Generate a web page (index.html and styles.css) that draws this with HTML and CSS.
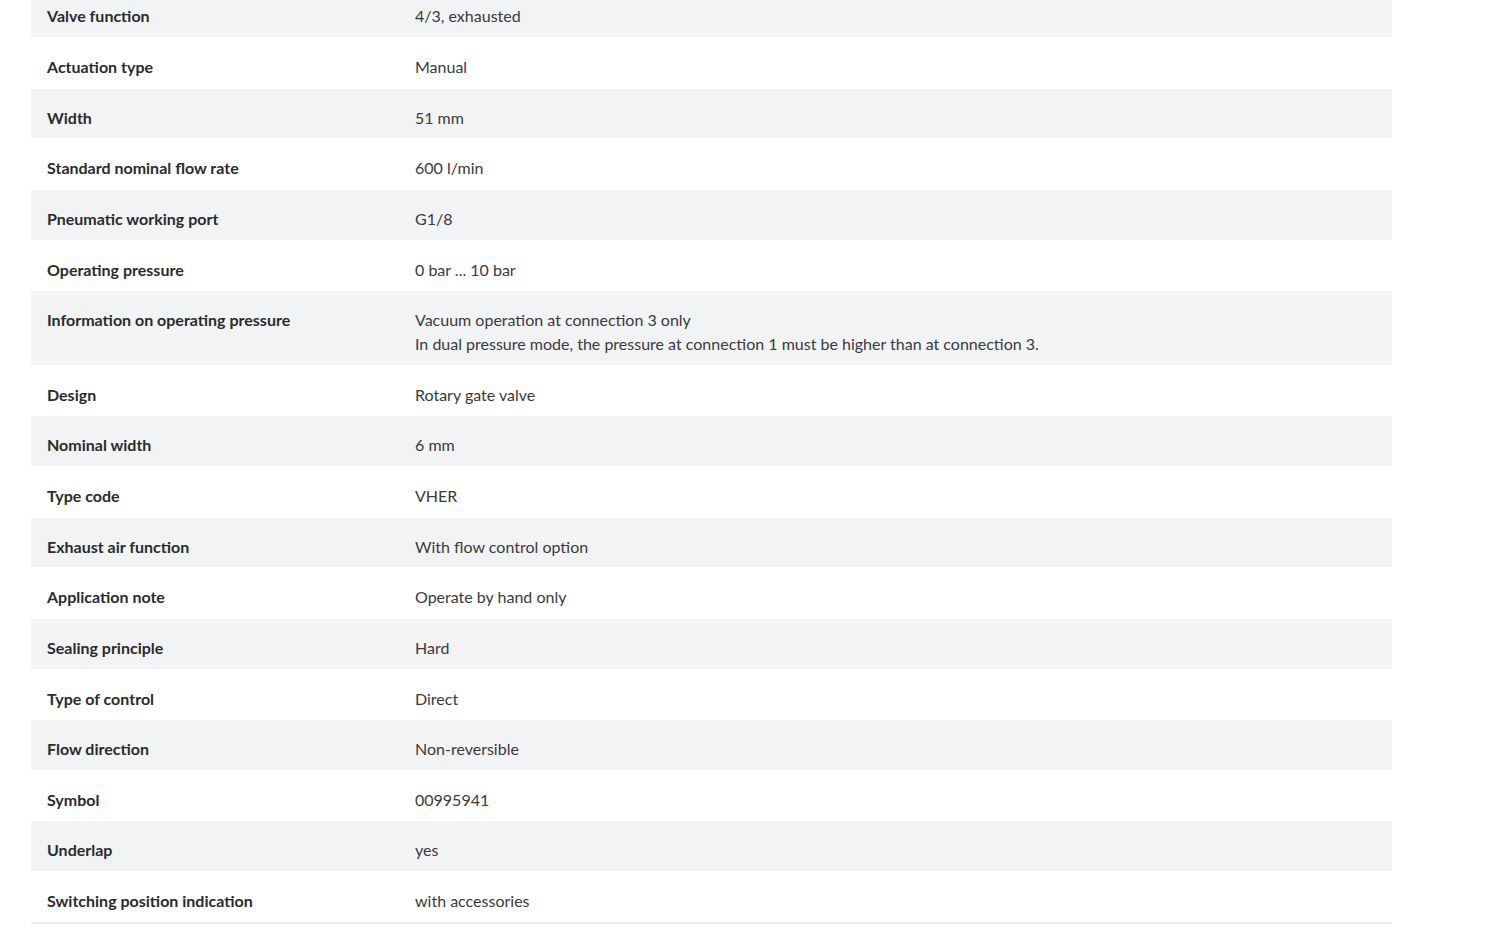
FILE: index.html
```html
<!DOCTYPE html>
<html lang="en">
<head>
<meta charset="utf-8">
<title>Technical data</title>
<link rel="stylesheet" href="styles.css">
</head>
<body>
<div class="specs">
  <div class="row"><div class="label">Valve function</div><div class="value">4/3, exhausted</div></div>
  <div class="row"><div class="label">Actuation type</div><div class="value">Manual</div></div>
  <div class="row"><div class="label">Width</div><div class="value">51&#8239;mm</div></div>
  <div class="row"><div class="label">Standard nominal flow rate</div><div class="value">600 l/min</div></div>
  <div class="row"><div class="label">Pneumatic working port</div><div class="value">G1/8</div></div>
  <div class="row"><div class="label">Operating pressure</div><div class="value">0 bar ... 10 bar</div></div>
  <div class="row"><div class="label">Information on operating pressure</div><div class="value">Vacuum operation at connection 3 only<br>In dual pressure mode, the pressure at connection 1 must be higher than at connection 3.</div></div>
  <div class="row"><div class="label">Design</div><div class="value">Rotary gate valve</div></div>
  <div class="row"><div class="label">Nominal width</div><div class="value">6 mm</div></div>
  <div class="row"><div class="label">Type code</div><div class="value">VHER</div></div>
  <div class="row"><div class="label">Exhaust air function</div><div class="value">With flow control option</div></div>
  <div class="row"><div class="label">Application note</div><div class="value">Operate by hand only</div></div>
  <div class="row"><div class="label">Sealing principle</div><div class="value">Hard</div></div>
  <div class="row"><div class="label">Type of control</div><div class="value">Direct</div></div>
  <div class="row"><div class="label">Flow direction</div><div class="value">Non-reversible</div></div>
  <div class="row"><div class="label">Symbol</div><div class="value">00995941</div></div>
  <div class="row"><div class="label">Underlap</div><div class="value">yes</div></div>
  <div class="row"><div class="label">Switching position indication</div><div class="value">with accessories</div></div>
</div>
</body>
</html>
```

FILE: styles.css
```css
html, body {
  margin: 0;
  padding: 0;
  background: #ffffff;
}
body {
  font-family: Lato, "Noto Sans", sans-serif;
  color: #333333;
  font-size: 16px;
  overflow: hidden;
}
.specs {
  margin: -12.625px 0 0 31px;
  width: 1361px;
}
.row {
  display: grid;
  grid-template-columns: 368px 1fr;
  padding: 17px 0 8.625px 16px;
  line-height: 24px;
  border-bottom: 1px solid #ffffff;
}
.row:nth-child(odd) {
  background: #f2f3f5;
}
.row:last-child {
  border-bottom: 2px solid #eceef0;
}
.label {
  font-weight: 700;
  color: #2b2b2e;
}
.value {
  font-weight: 400;
  color: #3a3a3d;
}
```
